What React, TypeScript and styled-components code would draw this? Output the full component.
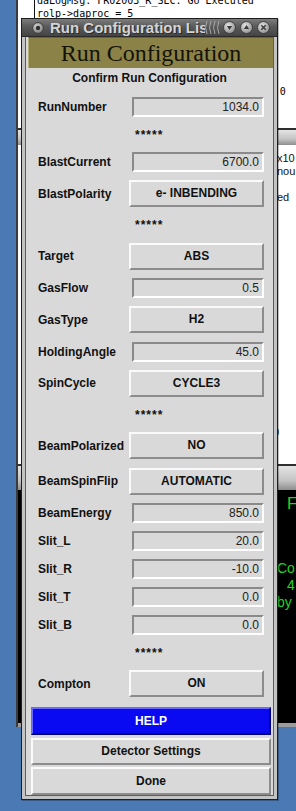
import React from "react";
import styled, { createGlobalStyle } from "styled-components";

const sans = `"Liberation Sans", Arial, Helvetica, sans-serif`;

const GlobalStyle = createGlobalStyle`
  html, body {
    margin: 0;
    padding: 0;
    background: #4a79b3;
  }
  body {
    width: 296px;
    height: 811px;
    overflow: hidden;
  }
`;

const Desktop = styled.div`
  position: relative;
  width: 296px;
  height: 811px;
  overflow: hidden;
  background: #4a79b3;
  font-family: ${sans};
`;

/* ---- windows lying behind the dialog ---- */

const BackWindow = styled.div<{ $top: number; $height: number; $bg?: string }>`
  position: absolute;
  left: 16px;
  top: ${p => p.$top}px;
  width: 330px;
  height: ${p => p.$height}px;
  box-sizing: border-box;
  display: flex;
  flex-direction: column;
  border-left: 2px solid #3b3b3b;
  background: ${p => p.$bg || "#fff"};
`;

const BackTitle = styled.div<{ $h: number }>`
  flex: 0 0 auto;
  height: ${p => p.$h}px;
  box-sizing: border-box;
  border-top: 2px solid #2e2e2e;
  background: linear-gradient(#e4e4e4, #c4c4c4 60%, #8e8e8e);
`;

const TermPane = styled.div`
  flex: 1;
  margin-left: 16px;
  padding: 24px 0 0 2px;
  border-left: 1px solid #111;
  font: 10px/13px "DejaVu Sans Mono", "Liberation Mono", monospace;
  color: #000;
  white-space: pre;
`;

const TermLine = styled.div<{ $indent?: number }>`
  height: 13px;
  margin-left: ${p => p.$indent || 0}px;
`;

const NotePane = styled.div`
  flex: 1;
  padding: 7px 0 0 259px;
  font: 11px/13px ${sans};
  color: #111;
  white-space: pre;
`;

const NoteLine = styled.div<{ $gap?: number; $shift?: number }>`
  height: 13px;
  margin-top: ${p => p.$gap || 0}px;
  margin-left: ${p => p.$shift || 0}px;
`;

const ConsolePane = styled.div`
  flex: 1;
  padding: 4px 0 0 259px;
  background: #000;
  border-bottom: 4px solid #9c9c9c;
  color: #22d422;
  font-family: ${sans};
  white-space: pre;
`;

const ConsoleLine = styled.div<{ $size: number; $gap?: number; $indent?: number }>`
  font-size: ${p => p.$size}px;
  line-height: ${p => p.$size + 3}px;
  margin-top: ${p => p.$gap || 0}px;
  margin-left: ${p => p.$indent || 0}px;
`;

/* ---- the dialog window ---- */

const Dialog = styled.section`
  position: absolute;
  left: 21px;
  top: 18px;
  width: 257px;
  height: 782px;
  box-sizing: border-box;
  display: flex;
  flex-direction: column;
  border: 1px solid #1e1e1e;
  background: #c3c3c3;
  box-shadow: 1px 1px 0 rgba(0, 0, 0, 0.25);
`;

const TitleBar = styled.header`
  flex: 0 0 auto;
  height: 18px;
  box-sizing: border-box;
  display: flex;
  align-items: center;
  padding: 0 6px 0 10px;
  border-bottom: 1px solid #2a2a2a;
  background: linear-gradient(#7c7c7c, #5a5a5a 45%, #444);
`;

const TitleText = styled.div`
  flex: 0 0 155px;
  margin-left: 6px;
  overflow: hidden;
  white-space: nowrap;
  font: bold 15px/17px ${sans};
  color: #d4d4d4;
  text-shadow: 1px 1px 0 #2c2c2c;
`;

const TitleButtons = styled.div`
  display: flex;
  align-items: center;
  gap: 4px;
  margin-left: 2px;
`;

const Frame = styled.div`
  flex: 1;
  display: flex;
  padding: 0 3px 3px;
`;

const Body = styled.div`
  flex: 1;
  display: flex;
  flex-direction: column;
  border: 1px solid #5c5c5c;
  border-top: 0;
  background: #d9d9d9;
  color: #111;
`;

const Banner = styled.div`
  height: 31px;
  margin-left: 2px;
  box-sizing: border-box;
  border-top: 1px solid #6b6336;
  border-left: 1px solid #b9b07a;
  background: #8b8248;
  font: 24px/30px "Liberation Serif", "Times New Roman", serif;
  color: #141207;
  text-align: center;
`;

const Heading = styled.div`
  height: 20px;
  margin-bottom: 5px;
  font: bold 12px/20px ${sans};
  text-align: center;
`;

const Row = styled.div<{ $h: number }>`
  display: flex;
  align-items: center;
  height: ${p => p.$h}px;
`;

const Label = styled.div`
  flex: 0 0 103px;
  box-sizing: border-box;
  padding-left: 12px;
  font: bold 12px ${sans};
  white-space: nowrap;
`;

const Entry = styled.div`
  width: 132px;
  height: 20px;
  margin-left: 3px;
  box-sizing: border-box;
  padding-right: 3px;
  border: 2px solid;
  border-color: #8a8a8a #fff #fff #8a8a8a;
  background: #d9d9d9;
  font: 12px/16px ${sans};
  text-align: right;
  color: #222;
`;

const Choice = styled.div`
  width: 135px;
  height: 27px;
  box-sizing: border-box;
  border: 2px solid;
  border-color: #fbfbfb #8c8c8c #8c8c8c #fbfbfb;
  background: #d9d9d9;
  font: bold 12px/23px ${sans};
  text-align: center;
`;

const Stars = styled.div`
  margin-left: 109px;
  font: bold 12px ${sans};
  letter-spacing: 1px;
`;

const WideButton = styled.div<{ $help?: boolean; $h: number; $mt?: number; $mb?: number }>`
  height: ${p => p.$h}px;
  margin: ${p => p.$mt || 0}px 2px ${p => p.$mb || 0}px 5px;
  box-sizing: border-box;
  border: 2px solid;
  border-color: ${p =>
    p.$help ? "#6a6aff #00007a #00007a #6a6aff" : "#fbfbfb #8c8c8c #8c8c8c #fbfbfb"};
  background: ${p => (p.$help ? "#0a0af2" : "#d9d9d9")};
  color: ${p => (p.$help ? "#fff" : "#111")};
  font: bold 12px/${p => p.$h - 4}px ${sans};
  text-align: center;
`;

/* ---- title bar drawings ---- */

const MenuKnob = () => (
  <svg width="12" height="12" viewBox="0 0 12 12">
    <defs>
      <radialGradient id="knob" cx="40%" cy="35%" r="70%">
        <stop offset="0" stopColor="#d6d6d6" />
        <stop offset="1" stopColor="#7a7a7a" />
      </radialGradient>
    </defs>
    <circle cx="6" cy="6" r="5.4" fill="url(#knob)" stroke="#333" strokeWidth="0.8" />
    <circle cx="6" cy="6" r="2.2" fill="#2e2e2e" />
  </svg>
);

const Grip = () => (
  <svg width="16" height="17" viewBox="0 0 16 17">
    {[2, 6, 10, 14].map(x => (
      <path key={x} d={`M${x} 2 Q${x - 3} 8.5 ${x} 15`} fill="none" stroke="#a8a8a8" strokeWidth="1" />
    ))}
  </svg>
);

const RoundButton = ({ kind }: { kind: "down" | "up" | "close" }) => (
  <svg width="13" height="13" viewBox="0 0 13 13">
    <defs>
      <radialGradient id={`rb-${kind}`} cx="40%" cy="35%" r="70%">
        <stop offset="0" stopColor="#e4e4e4" />
        <stop offset="1" stopColor="#8c8c8c" />
      </radialGradient>
    </defs>
    <circle cx="6.5" cy="6.5" r="6" fill={`url(#rb-${kind})`} stroke="#333" strokeWidth="0.8" />
    {kind === "down" && <path d="M3.8 5 L9.2 5 L6.5 9 Z" fill="#3a3a3a" />}
    {kind === "up" && <path d="M3.8 8 L9.2 8 L6.5 4 Z" fill="#3a3a3a" />}
    {kind === "close" && (
      <path d="M4.3 4.3 L8.7 8.7 M8.7 4.3 L4.3 8.7" stroke="#3a3a3a" strokeWidth="1.6" />
    )}
  </svg>
);

type Field =
  | { kind: "entry"; label: string; value: string }
  | { kind: "choice"; label: string; value: string }
  | { kind: "stars" };

const fields: Field[] = [
  { kind: "entry", label: "RunNumber", value: "1034.0" },
  { kind: "stars" },
  { kind: "entry", label: "BlastCurrent", value: "6700.0" },
  { kind: "choice", label: "BlastPolarity", value: "e- INBENDING" },
  { kind: "stars" },
  { kind: "choice", label: "Target", value: "ABS" },
  { kind: "entry", label: "GasFlow", value: "0.5" },
  { kind: "choice", label: "GasType", value: "H2" },
  { kind: "entry", label: "HoldingAngle", value: "45.0" },
  { kind: "choice", label: "SpinCycle", value: "CYCLE3" },
  { kind: "stars" },
  { kind: "choice", label: "BeamPolarized", value: "NO" },
  { kind: "choice", label: "BeamSpinFlip", value: "AUTOMATIC" },
  { kind: "entry", label: "BeamEnergy", value: "850.0" },
  { kind: "entry", label: "Slit_L", value: "20.0" },
  { kind: "entry", label: "Slit_R", value: "-10.0" },
  { kind: "entry", label: "Slit_T", value: "0.0" },
  { kind: "entry", label: "Slit_B", value: "0.0" },
  { kind: "stars" },
  { kind: "choice", label: "Compton", value: "ON" }
];

const rowHeight = { entry: 28, choice: 35.5, stars: 27 };

const termLines = [
  "daLogMsg: FR02003_R_SEC: Go Executed",
  "rolp->daproc = 5",
  "",
  "",
  "",
  "",
  "",
  "daLogMsg: FR02003_R_SEC: Prestart  0"
];

export default function App() {
  return (
    <Desktop>
      <GlobalStyle />

      <BackWindow $top={-30} $height={158}>
        <TermPane>
          {termLines.map((l, i) => (
            <TermLine key={i} $indent={i === 7 ? 2 : 0}>
              {i === 7 ? l.padEnd(40, " ") + "0" : l}
            </TermLine>
          ))}
        </TermPane>
      </BackWindow>

      <BackWindow $top={128} $height={336}>
        <BackTitle $h={17} />
        <NotePane>
          <NoteLine>x10</NoteLine>
          <NoteLine>nou</NoteLine>
          <NoteLine />
          <NoteLine>ed</NoteLine>
          <NoteLine $gap={222} $shift={-4}>0</NoteLine>
        </NotePane>
      </BackWindow>

      <BackWindow $top={464} $height={263} $bg="#000">
        <BackTitle $h={26} />
        <ConsolePane>
          <ConsoleLine $size={17} $indent={10}>F</ConsoleLine>
          <ConsoleLine $size={14} $gap={46}>Co</ConsoleLine>
          <ConsoleLine $size={14} $indent={10}>4</ConsoleLine>
          <ConsoleLine $size={14}>by</ConsoleLine>
        </ConsolePane>
      </BackWindow>

      <Dialog>
        <TitleBar>
          <MenuKnob />
          <TitleText>Run Configuration List</TitleText>
          <Grip />
          <TitleButtons>
            <RoundButton kind="down" />
            <RoundButton kind="up" />
            <RoundButton kind="close" />
          </TitleButtons>
        </TitleBar>
        <Frame>
          <Body>
            <Banner>Run Configuration</Banner>
            <Heading>Confirm Run Configuration</Heading>
            {fields.map((f, i) => (
              <Row key={i} $h={rowHeight[f.kind]}>
                {f.kind === "stars" ? (
                  <Stars>*****</Stars>
                ) : (
                  <>
                    <Label>{f.label}</Label>
                    {f.kind === "entry" ? <Entry>{f.value}</Entry> : <Choice>{f.value}</Choice>}
                  </>
                )}
              </Row>
            ))}
            <WideButton $help $h={28} $mt={5.5} $mb={3}>
              HELP
            </WideButton>
            <WideButton $h={27} $mb={2}>
              Detector Settings
            </WideButton>
            <WideButton $h={28}>Done</WideButton>
          </Body>
        </Frame>
      </Dialog>
    </Desktop>
  );
}
